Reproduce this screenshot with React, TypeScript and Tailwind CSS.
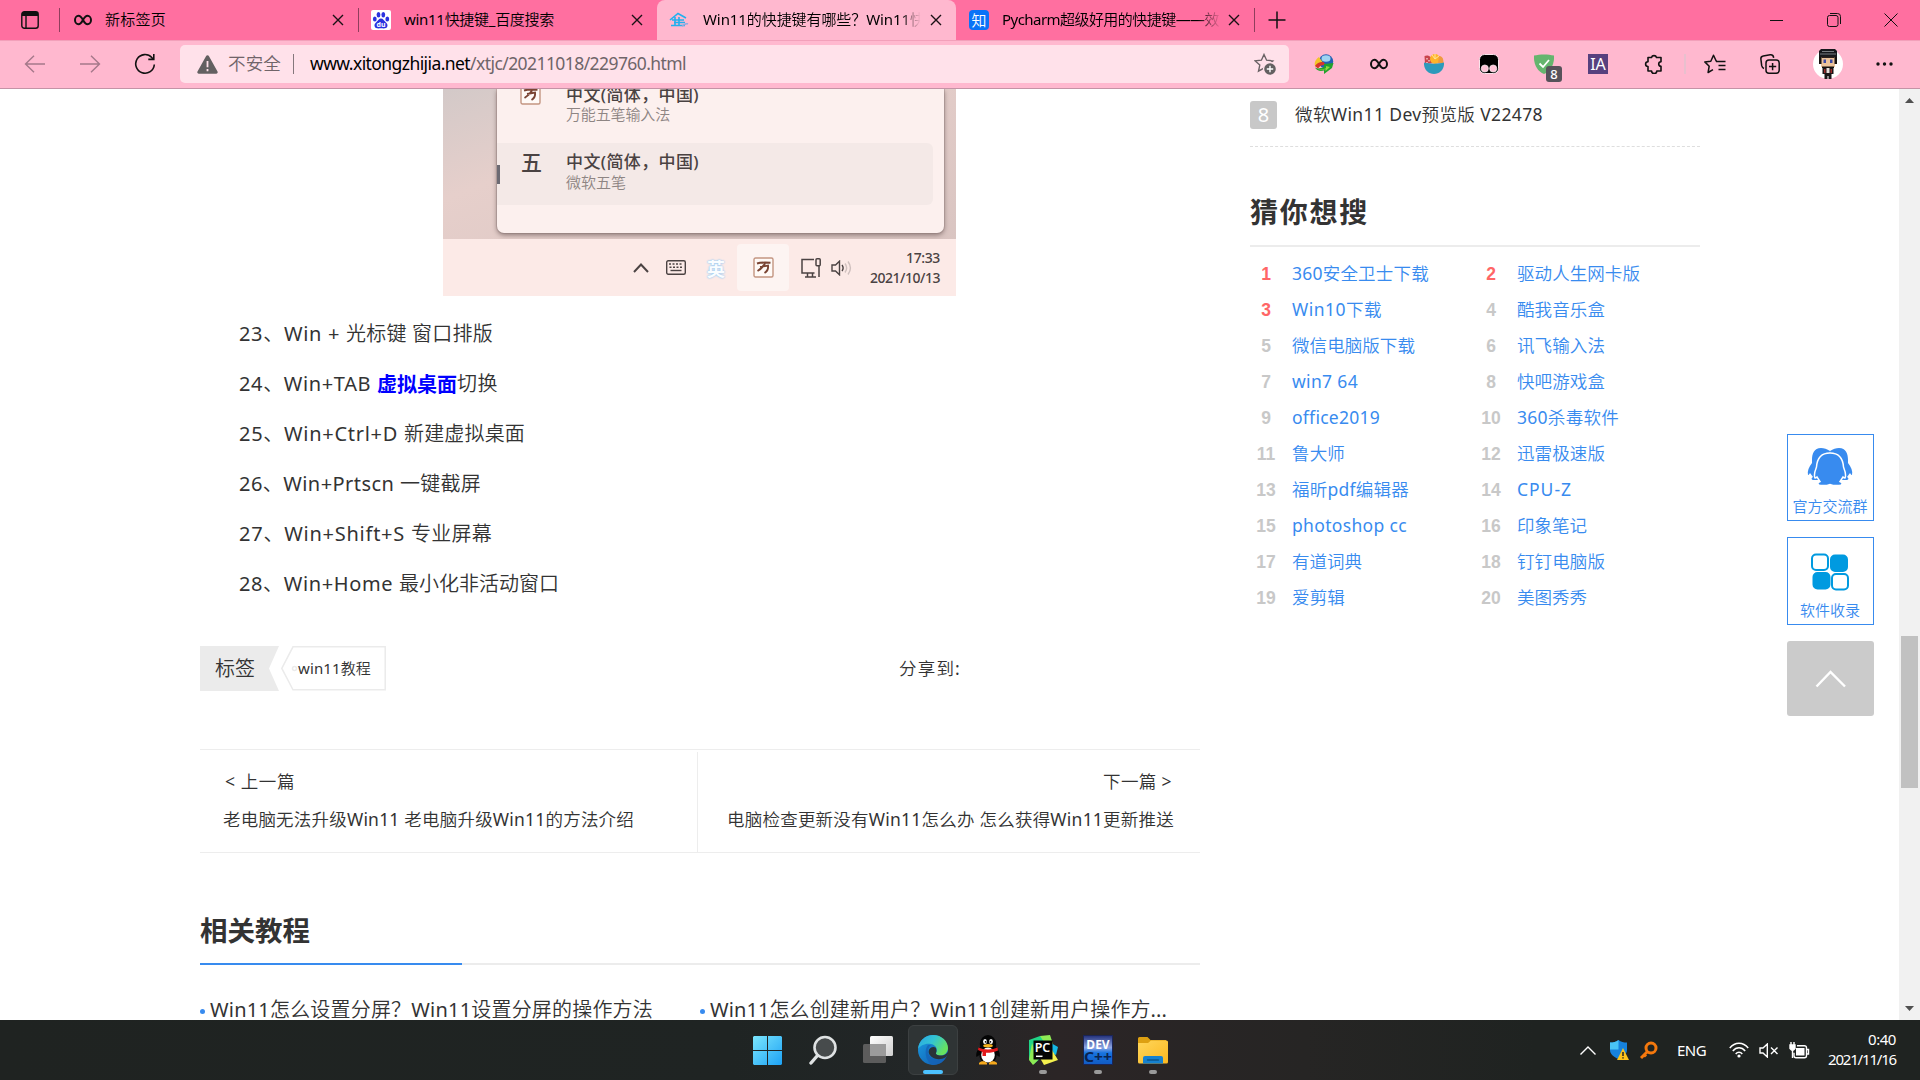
import { useLayoutEffect, useRef, type ReactNode } from "react";

/** Single line of text whose tracking is adjusted so that it spans `w` pixels. */
function Fit({ w, className = "", children }: { w: number; className?: string; children: ReactNode }) {
  const ref = useRef<HTMLSpanElement>(null);
  useLayoutEffect(() => {
    const el = ref.current;
    if (!el) return;
    el.style.letterSpacing = "0px";
    const n = Array.from(el.textContent ?? "").length;
    el.style.letterSpacing = `${(w - el.getBoundingClientRect().width) / n}px`;
  }, [w]);
  return (
    <span ref={ref} className={`inline-block shrink-0 whitespace-pre ${className}`}>
      {children}
    </span>
  );
}

const Cross = ({ className = "" }: { className?: string }) => (
  <svg className={`shrink-0 ${className}`} width="12" height="12" viewBox="0 0 12 12" fill="none" stroke="#1a1014" strokeWidth="1.4">
    <path d="M1 1l10 10M11 1L1 11" />
  </svg>
);

const Infinity2 = ({ className = "" }: { className?: string }) => (
  <svg className={`shrink-0 ${className}`} width="18" height="12" viewBox="0 0 18 12" fill="none" stroke="#111" strokeWidth="2">
    <path d="M9 6C7.400 3 6.200 1.800 4.500 1.800a3.500 4.200 0 0 0 0 8.400C6.200 10.200 7.400 9 9 6s2.800-4.200 4.500-4.200a3.500 4.200 0 0 1 0 8.400C11.800 10.200 10.600 9 9 6z" />
  </svg>
);

function TabBar() {
  return (
    <div className="flex h-10 items-center bg-[#ff6fa0] text-[15px] text-black">
      <svg className="ml-[21px] shrink-0" width="18" height="18" viewBox="0 0 18 18" fill="none" stroke="#111" strokeWidth="1.4">
        <rect x="0.8" y="0.8" width="16.400" height="16.400" rx="2.500" />
        <path d="M1 3h16" strokeWidth="4" />
        <path d="M5 4v13" />
      </svg>
      <div className="ml-5 h-6 w-px bg-[#8f3e5c]" />
      <Infinity2 className="ml-3.5" />
      <Fit w={61} className="ml-[13px] pb-px">新标签页</Fit>
      <Cross className="ml-[166px]" />
      <div className="ml-3.5 h-6 w-px bg-[#8f3e5c]" />
      <svg className="ml-3 shrink-0" width="20" height="20" viewBox="0 0 20 20">
        <rect width="20" height="20" rx="2" fill="#fff" />
        <g fill="#2a32df">
          <ellipse cx="3.800" cy="9" rx="1.900" ry="2.500" />
          <ellipse cx="7.500" cy="4.700" rx="1.900" ry="2.700" />
          <ellipse cx="12.300" cy="4.700" rx="1.900" ry="2.700" />
          <ellipse cx="16.300" cy="9" rx="1.900" ry="2.500" />
          <path d="M10 8.500c2 0 3 2 4.300 3.300 1.700 1.600 2.700 2.800 2 4.800-.7 1.900-2.700 2-6.300 1.700-3.600.3-5.600.2-6.300-1.700-.7-2 .3-3.200 2-4.800C7 10.500 8 8.500 10 8.500z" />
        </g>
        <text x="10" y="16.500" textAnchor="middle" fontSize="7" fontWeight="700" fill="#fff">du</text>
      </svg>
      <Fit w={150} className="ml-[13px] pb-px">win11快捷键_百度搜索</Fit>
      <Cross className="ml-[77px]" />
      <div className="ml-3.5 flex h-10 w-[299px] items-center rounded-t-lg bg-[#ffb8cf]">
        <svg className="ml-3 shrink-0" width="20" height="16" viewBox="0 0 20 16" fill="none" stroke="#23b0ee" strokeWidth="1.600">
          <path d="M1 8L9 1.500 17 6M3 8h12M5 10.500h11M2 13.500h14M6 5v9M10 5v9" />
          <path d="M13 14c2-1 4-3 6-2" stroke="#8fa9e0" />
        </svg>
        <Fit w={222} className="ml-3.5 pb-px [mask-image:linear-gradient(to_right,black_89%,transparent_98%)]">Win11的快捷键有哪些？Win11快</Fit>
        <Cross className="ml-[5px]" />
      </div>
      <svg className="ml-[13px] shrink-0" width="20" height="20" viewBox="0 0 20 20">
        <rect width="20" height="20" rx="4" fill="#0a73f7" />
        <text x="10" y="15.500" textAnchor="middle" fontSize="15" fontWeight="500" fill="#fff">知</text>
      </svg>
      <Fit w={217} className="ml-[13px] pb-px [mask-image:linear-gradient(to_right,black_90%,transparent_101%)]">Pycharm超级好用的快捷键——效</Fit>
      <Cross className="ml-[9px]" />
      <div className="ml-3.5 h-6 w-px bg-[#8f3e5c]" />
      <svg className="ml-[13px] shrink-0" width="18" height="18" viewBox="0 0 18 18" stroke="#111" strokeWidth="1.500">
        <path d="M9 0.500v17M0.500 9h17" />
      </svg>
      <svg className="ml-auto mr-[44px] shrink-0" width="13" height="13" viewBox="0 0 13 13" stroke="#111">
        <path d="M0 6.500h13" />
      </svg>
      <svg className="mr-[43px] shrink-0" width="14" height="14" viewBox="0 0 14 14" fill="none" stroke="#111">
        <rect x="0.500" y="2.500" width="10.500" height="11" rx="2" />
        <path d="M3 .5h7.500a3 3 0 0 1 3 3V11" />
      </svg>
      <svg className="mr-[22px] shrink-0" width="14" height="14" viewBox="0 0 14 14" stroke="#111">
        <path d="M.5.5l13 13M13.500.5l-13 13" />
      </svg>
    </div>
  );
}

const STAR = "M10 1.500l2.600 5.700 6.200.7-4.600 4.200 1.300 6.100L10 15.100l-5.500 3.100 1.300-6.100L1.200 7.900l6.200-.7z";

function Toolbar() {
  return (
    <div className="flex h-[49px] items-center border-b border-[#c493a6] bg-[#ffb8cf] shadow-[inset_0_1px_0_#f2a0ba]">
      <svg className="ml-6 shrink-0" width="21" height="18" viewBox="0 0 21 18" fill="none" stroke="#a5788a" strokeWidth="1.400">
        <path d="M10 .7L1.500 9l8.500 8.300M1.500 9H21" />
      </svg>
      <svg className="ml-[35px] shrink-0" width="21" height="18" viewBox="0 0 21 18" fill="none" stroke="#a5788a" strokeWidth="1.400">
        <path d="M11 .7L19.500 9 11 17.300M19.500 9H0" />
      </svg>
      <svg className="ml-[33px] shrink-0" width="22" height="22" viewBox="0 0 22 22" fill="none" stroke="#111" strokeWidth="1.600">
        <path d="M20.300 11.500A9.300 9.300 0 1 1 17.800 4.500l1.700 1.700M19.800 1v5.400h-5.500" />
      </svg>
      <div className="ml-6 flex h-[38px] w-[1109px] items-center rounded-[5px] bg-[#ffe1ea] text-[17.5px]">
        <svg className="ml-[17px] shrink-0" width="21" height="19" viewBox="0 0 21 19">
          <path d="M9 1.200a1.700 1.700 0 0 1 3 0l8.500 15.400a1.500 1.500 0 0 1-1.300 2.200H1.800a1.500 1.500 0 0 1-1.300-2.200z" fill="#636061" />
          <path d="M10.500 6v6.200M10.500 14v2.200" stroke="#ffe1ea" strokeWidth="1.800" />
        </svg>
        <Fit w={53} className="ml-2.5 pb-0.5 text-[#706469]">不安全</Fit>
        <div className="ml-3 h-5 w-px bg-[#85777c]" />
        <Fit w={376} className="ml-4 pb-0.5 text-[#6f6569]">
          <span className="text-black">www.xitongzhijia.net</span>/xtjc/20211018/229760.html
        </Fit>
        <svg className="ml-auto mr-[13px] shrink-0" width="22" height="22" viewBox="0 0 22 22" fill="none" stroke="#6a6265" strokeWidth="1.400">
          <path d={STAR} />
          <circle cx="16" cy="16" r="6.500" fill="#636061" stroke="#ffe1ea" />
          <path d="M16 12.800v6.400M12.800 16h6.400" stroke="#fff" />
        </svg>
      </div>
      <svg className="ml-[25px] shrink-0" width="20" height="20" viewBox="0 0 20 20">
        <circle cx="12" cy="7.500" r="7.200" fill="#2360b4" />
        <ellipse cx="12" cy="4.500" rx="4.500" ry="3.200" fill="#9fd4f2" />
        <path d="M5 3C2 5 0 8 1 12l3 2c0-3 1.500-5 4.500-6C7 6 6 4.500 5 3z" fill="#f3c529" />
        <path d="M1 12c2-3 5-4.500 8.500-4L12 11c-4-.5-6 .5-8 3.500z" fill="#d5362a" />
        <path d="M1 13.500c2.500 1.500 5 1 9-.5v-3l9.500-1-1.500 5-8 6v-3.500c-4 1-7.500 0-9-3z" fill="#23a12d" />
        <path d="M4 15c3 1 6 .5 8-1v-2l4 1-4.500 4v-2c-3 1.500-6 1.500-7.500 0z" fill="#8fdb3f" />
      </svg>
      <Infinity2 className="ml-9" />
      <svg className="ml-9 shrink-0" width="20" height="20" viewBox="0 0 20 20">
        <path d="M.5 2C4 .5 8 2 9.500 9L1 10z" fill="#c9444c" />
        <path d="M3 4v1.500M5 6v1.500M3 8v1" stroke="#fff" />
        <circle cx="11" cy="5" r="5" fill="#ffb32a" />
        <path d="M11 5l-3-4M11 5l4-3M11 5v-5" stroke="#ffe49a" />
        <path d="M15 2c3 0 4.500 2 4.500 7H14z" fill="#ef9a3f" />
        <path d="M0 8.500c5 1.500 15 1.500 20 0C20.500 15 16 20 10 20S-.5 15 0 8.500z" fill="#2d9abb" />
      </svg>
      <svg className="ml-[35px] shrink-0" width="20" height="20" viewBox="0 0 20 20">
        <rect x="0.500" y="0.500" width="19" height="19" rx="5" fill="#000" stroke="#f9e4eb" />
        <circle cx="5.800" cy="14.500" r="3.600" fill="#ffc3d7" stroke="#fff" strokeWidth=".6" />
        <circle cx="14.200" cy="14.500" r="3.600" fill="#ffc3d7" stroke="#fff" strokeWidth=".6" />
      </svg>
      <div className="relative ml-[35px] shrink-0">
        <svg width="20" height="20" viewBox="0 0 20 20">
          <path d="M0 1.500C6 0 14 0 20 1.500 20.500 10 17 17 10 20 3 17-.5 10 0 1.500z" fill="#65b56e" />
          <path d="M5.500 9.500L9 13l6-7" fill="none" stroke="#fff" strokeWidth="1.800" />
        </svg>
        <span className="absolute left-[12px] top-[12px] flex h-4 w-4 items-center justify-center rounded-[3px] bg-[#57525a] text-[13px] font-medium leading-none text-white">8</span>
      </div>
      <div className="ml-[34px] flex h-5 w-5 shrink-0 items-center justify-center bg-[#57407e] text-[16px] leading-none text-white">IA</div>
      <svg className="ml-9 shrink-0" width="20" height="20" viewBox="0 0 20 20" fill="none" stroke="#111" strokeWidth="1.600">
        <path d="M4 3.500h3.500a2.600 2.600 0 0 1 5 0H17v4.200a2.300 2.300 0 0 0 0 4.600V17h-4.200a2.600 2.600 0 0 1-5.200 0H4v-4.500a2.400 2.400 0 0 1 0-4.800z" strokeLinejoin="round" />
      </svg>
      <div className="ml-5 h-5 w-0.5 bg-[#e8c0ce]" />
      <svg className="ml-[18px] shrink-0" width="22" height="20" viewBox="0 0 22 20" fill="none" stroke="#111" strokeWidth="1.500">
        <path d="M12 7.500h9.500M14.500 11.500h7M14.500 15.500h7" />
        <path d="M13 7.200h-.7L9.500 1.300 6.800 7.200l-6 .7 4.400 4.300-1.100 6.300L9 15.700" strokeLinejoin="round" />
      </svg>
      <svg className="ml-[34px] shrink-0" width="20" height="20" viewBox="0 0 20 20" fill="none" stroke="#111" strokeWidth="1.500">
        <rect x="6" y="6" width="13.200" height="13.200" rx="3" />
        <path d="M12.600 9v7.200M9 12.600h7.200M4 14.500c-1.500-.5-2-1.500-2.300-2.800L.9 5.200C.7 3.500 1.500 2.300 3.200 2l7-1.200c1.700-.2 3 .5 3.300 2.200l.1.800" />
      </svg>
      <svg className="ml-[33px] shrink-0" width="30" height="30" viewBox="0 0 30 30">
        <circle cx="15" cy="15" r="15" fill="#fff" />
        <path d="M8 0h14l2 2v7H6V2z" fill="#16181c" />
        <path d="M9 2.500h12M7 5h16" stroke="#777b80" />
        <rect x="8" y="8" width="14" height="10" fill="#ecc39b" />
        <path d="M6 8h2.500v7H6zM21.500 8H24v7h-2.500zM9 17.500h12V19H9z" fill="#15110f" />
        <path d="M8.500 7.500h13v1.500h-13z" fill="#2c211e" />
        <path d="M10.500 10.500H13V14h-2.500zM17 10.500h2.500V14H17z" fill="#3c4aa5" />
        <path d="M9.500 19h11v6h-2v5h-3v-3h-1v3h-3v-5h-2z" fill="#1b1718" />
        <path d="M13.500 19h3v5h-3z" fill="#e8e0dc" />
        <path d="M11 20h1.500v4H11zM17.500 20H19v4h-1.500z" fill="#9c2a2a" />
      </svg>
      <svg className="ml-[33px] shrink-0" width="17" height="4" viewBox="0 0 17 4" fill="#111">
        <circle cx="2" cy="2" r="1.700" />
        <circle cx="8.500" cy="2" r="1.700" />
        <circle cx="15" cy="2" r="1.700" />
      </svg>
    </div>
  );
}

const WanIcon = () => (
  <svg className="shrink-0" width="21" height="21" viewBox="0 0 21 21" fill="none">
    <rect x="1" y="1" width="19" height="19" rx="1.500" fill="#fffaf7" stroke="#c39581" strokeWidth="1.400" />
    <path d="M4 6.500c4-1.500 8-1.200 13.500-.8M7 10l8-1.500c.5 3.500-1 6-3.500 7.500M12 6.500c-2 3.500-4 5.500-7.500 7.500" stroke="#7a4433" strokeWidth="1.900" />
  </svg>
);

function InputMethodShot() {
  return (
    <div className="ml-[243px] flex h-[207px] w-[513px] flex-col bg-[linear-gradient(160deg,#d3c9c8_0%,#e6cfcb_28%,#d6c2bf_100%)] text-[#4a4242]">
      <div className="ml-[54px] h-36 w-[447px] shrink-0 overflow-hidden rounded-b-[7px] bg-[#fcf0ee] shadow-[0_2px_5px_#8a7674,0_0_0_1px_#c5b0ae]">
        <div className="-mt-3.5 flex h-[68px] pt-[9px]">
          <div className="ml-[23px] w-[46px]"><WanIcon /></div>
          <div className="flex flex-col items-start text-[17px] leading-[22px]">
            <Fit w={133} className="font-['Noto_Sans','Noto_Sans_CJK_SC',sans-serif] font-medium">中文(简体，中国)</Fit>
            <Fit w={104} className="-mt-[3px] text-[15px] text-[#8e8583]">万能五笔输入法</Fit>
          </div>
        </div>
        <div className="flex h-[62px] w-[436px] items-center rounded-r-md bg-[#f4e9e7]">
          <div className="h-[19px] w-[3px] bg-[#6c6a73]" />
          <div className="ml-[21px] w-[45px] pb-[26px] font-['Noto_Sans_CJK_SC',sans-serif] text-[21px] font-medium leading-none">五</div>
          <div className="flex flex-col items-start pb-1 text-[17px] leading-[22px]">
            <Fit w={133} className="font-['Noto_Sans','Noto_Sans_CJK_SC',sans-serif] font-medium">中文(简体，中国)</Fit>
            <Fit w={60} className="-mt-0.5 text-[15px] text-[#8e8583]">微软五笔</Fit>
          </div>
        </div>
      </div>
      <div className="mt-1.5 flex h-[57px] items-center bg-[#fceae7]">
        <svg className="ml-[190px] shrink-0" width="16" height="10" viewBox="0 0 16 10" fill="none" stroke="#4b4343" strokeWidth="2">
          <path d="M1 9l7-7.500L15 9" />
        </svg>
        <svg className="ml-[17px] shrink-0" width="20" height="15" viewBox="0 0 20 15" fill="none" stroke="#4b4343" strokeWidth="1.400">
          <rect x="0.700" y="0.700" width="18.600" height="13.600" rx="1.500" />
          <path d="M3 4h14M3.500 7.200h13" strokeDasharray="2 1.500" />
          <path d="M4.500 10.500h11" />
        </svg>
        <span className="ml-[21px] w-5 font-['Noto_Sans_CJK_SC',sans-serif] text-[18px] font-bold leading-none text-[#fafdff] [text-shadow:0_0_2px_#9accf5,0_0_2px_#9accf5]">英</span>
        <div className="ml-2.5 flex h-[47px] w-[52px] items-center justify-center rounded bg-[#fdf4f2]"><WanIcon /></div>
        <svg className="ml-3 shrink-0" width="20" height="20" viewBox="0 0 20 20" fill="none" stroke="#4b4343" strokeWidth="1.500">
          <path d="M13 1.500H1v13.500h12.500M4 19h11M6.500 15v4M11.500 15v4M18 8v11" />
          <rect x="15" y="0.800" width="4.200" height="7" rx="1" />
        </svg>
        <svg className="ml-2.5 shrink-0" width="21" height="16" viewBox="0 0 21 16" fill="none" stroke="#4b4343" strokeWidth="1.400">
          <path d="M1 5h3.500l4-3.800v13.600l-4-3.800H1zM11 5c1.500 2 1.500 4 0 6" />
          <path d="M14 3.500c2.200 3 2.200 6 0 9M17 1.500c3 4 3 9 0 13" stroke="#cfc0be" />
        </svg>
        <div className="ml-auto mr-4 flex flex-col items-end text-[14px] font-medium leading-5 text-[#4a4242]">
          <Fit w={34}>17:33</Fit>
          <Fit w={70}>2021/10/13</Fit>
        </div>
      </div>
    </div>
  );
}

/** Each step is a run of pieces: text, width and an optional highlight. */
const STEPS: [string, number, boolean?][][] = [
  [["23、Win + ", 107], ["光标键 窗口排版", 147]],
  [["24、Win+TAB ", 138], ["虚拟桌面", 80, true], ["切换", 41]],
  [["25、Win+Ctrl+D ", 165], ["新建虚拟桌面", 121]],
  [["26、Win+Prtscn ", 161], ["一键截屏", 81]],
  [["27、Win+Shift+S ", 172], ["专业屏幕", 81]],
  [["28、Win+Home ", 160], ["最小化非活动窗口", 160]],
];

function Article() {
  return (
    <div className="ml-[200px] w-[1000px] shrink-0 text-[#333]">
      <InputMethodShot />
      <div className="mt-[13px] pl-[39px] text-[20px]">
        {STEPS.map((pieces, i) => (
          <div key={i} className="flex h-[50px] items-center">
            {pieces.map(([text, w, hot]) => (
              <Fit key={text} w={w} className={hot ? "pb-px font-['Noto_Sans_CJK_SC',sans-serif] font-bold text-[#0000ff]" : ""}>{text}</Fit>
            ))}
          </div>
        ))}
      </div>

      <div className="mt-[37px] flex h-[45px] items-center">
        <div className="flex h-[45px] w-[79px] items-center bg-[#ebebeb] pl-[15px] text-[20px] [clip-path:polygon(0_0,100%_0,calc(100%-10px)_50%,100%_100%,0_100%)]">标签</div>
        <div className="relative ml-0.5 h-[45px] w-[105px]">
          <svg width="105" height="45" viewBox="0 0 105 45" fill="none" stroke="#ebebeb" strokeWidth="1.500">
            <path d="M12 .8h92.200v43H12L.8 22.300z" />
            <circle cx="13.500" cy="22.500" r="2" />
          </svg>
          <Fit w={73} className="absolute left-[17px] top-0 text-[15px] leading-[45px]">win11教程</Fit>
        </div>
        <Fit w={62} className="ml-[513px] text-[17.5px]">分享到:</Fit>
      </div>

      <div className="mt-[58px] flex h-[104px] border-y border-[#ededed] text-[17.5px]">
        <div className="mt-0.5 flex w-[498px] flex-col border-r border-[#ededed] pl-[23px] pt-[11px]">
          <div className="flex h-[37px] items-center pl-0.5"><Fit w={70}>{"< 上一篇"}</Fit></div>
          <div className="flex h-[38px] items-center"><Fit w={411}>老电脑无法升级Win11 老电脑升级Win11的方法介绍</Fit></div>
        </div>
        <div className="mt-0.5 flex flex-1 flex-col items-end pr-[26px] pt-[11px]">
          <div className="flex h-[37px] items-center pr-0.5"><Fit w={69}>{"下一篇 >"}</Fit></div>
          <div className="flex h-[38px] items-center"><Fit w={447}>电脑检查更新没有Win11怎么办 怎么获得Win11更新推送</Fit></div>
        </div>
      </div>

      <h2 className="mt-[57px] flex h-10 items-center font-['Noto_Sans_CJK_SC',sans-serif] text-[27.5px] font-bold">相关教程</h2>
      <div className="mt-[13px] h-0.5 bg-[#ececec]"><div className="h-0.5 w-[262px] bg-[#388bef]" /></div>
      <div className="flex h-[90px] text-[20px]">
        <div className="flex w-[500px] items-center">
          <i className="mt-0.5 h-[5px] w-[5px] rounded-full bg-[#388bef]" />
          <Fit w={443} className="ml-[5px]">Win11怎么设置分屏？Win11设置分屏的操作方法</Fit>
        </div>
        <div className="flex w-[500px] items-center">
          <i className="mt-0.5 h-[5px] w-[5px] rounded-full bg-[#388bef]" />
          <Fit w={457} className="ml-[5px]">Win11怎么创建新用户？Win11创建新用户操作方...</Fit>
        </div>
      </div>
    </div>
  );
}

const SEARCHES: [string, number][] = [
  ["360安全卫士下载", 137], ["驱动人生网卡版", 123],
  ["Win10下载", 90], ["酷我音乐盒", 88],
  ["微信电脑版下载", 123], ["讯飞输入法", 88],
  ["win7 64", 66], ["快吧游戏盒", 88],
  ["office2019", 88], ["360杀毒软件", 102],
  ["鲁大师", 53], ["迅雷极速版", 88],
  ["福昕pdf编辑器", 117], ["CPU-Z", 55],
  ["photoshop cc", 115], ["印象笔记", 70],
  ["有道词典", 70], ["钉钉电脑版", 88],
  ["爱剪辑", 53], ["美图秀秀", 70],
];

function Sidebar() {
  return (
    <div className="ml-[50px] w-[450px] shrink-0">
      <div className="flex h-[58px] items-start border-b border-dashed border-[#dedede] pt-3">
        <div className="flex h-7 w-[27px] items-center justify-center rounded-[3px] bg-[#c8c8c8] text-[20px] leading-none text-white">8</div>
        <Fit w={248} className="ml-[18px] text-[17.5px] leading-[26px] text-[#333]">微软Win11 Dev预览版 V22478</Fit>
      </div>
      <h2 className="mt-11 flex h-10 items-center font-['Noto_Sans_CJK_SC',sans-serif] text-[28px] font-bold text-[#333]"><Fit w={119}>猜你想搜</Fit></h2>
      <div className="mt-3.5 h-0.5 bg-[#ececec]" />
      <div className="mt-2 grid grid-cols-2">
        {SEARCHES.map(([label, w], i) => (
          <div key={label} className="flex h-9 items-center">
            <span className={`w-8 pt-0.5 text-center font-['Liberation_Sans'] text-[17.5px] font-bold ${i < 3 ? "text-[#ff6666]" : "text-[#c8c8c8]"}`}>{i + 1}</span>
            <Fit w={w} className="ml-2.5 text-[17.5px] text-[#388bef]">{label}</Fit>
          </div>
        ))}
      </div>
    </div>
  );
}

function FloatingButtons() {
  return (
    <div className="ml-[87px] flex w-[87px] shrink-0 flex-col pt-[345px] text-[15px] text-[#388bef]">
      <div className="flex h-[87px] flex-col items-center border border-[#388bef] pr-px pt-[13px]">
        <svg className="shrink-0" width="46" height="38" viewBox="0 0 46 38" fill="#388bef">
          <path d="M14 0C7 0 5 6 5 12v3c-3 4-5 8-4 12 1 0 2-2 2-2l3 4c-2 1-2 3 1 3h12L23 3C20 1 17 0 14 0zM32 0c7 0 9 6 9 12v3c3 4 5 8 4 12-1 0-2-2-2-2l-3 4c2 1 2 3-1 3H27L23 3c3-2 6-3 9-3z" />
          <path d="M23 5C13 5 10 12 9.500 19c-2 5-2.500 9-1.500 11 1 0 2-1 2-1l3 4.500c-3 1-3 4 1 4h6l3-1 3 1h6c4 0 4-3 1-4l3-4.500s1 1 2 1c1-2 .5-6-1.500-11C36 12 33 5 23 5z" stroke="#fff" strokeWidth="1.500" />
        </svg>
        <Fit w={75} className="leading-[40px]">官方交流群</Fit>
      </div>
      <div className="mt-4 flex h-[88px] flex-col items-center border border-[#388bef] pr-px pt-[15px]">
        <svg className="shrink-0" width="38" height="38" viewBox="0 0 38 38" fill="#009ae0" stroke="#009ae0" strokeWidth="2">
          <rect x="1" y="1.500" width="16" height="15.500" rx="4" fill="none" />
          <rect x="20" y="2.500" width="16" height="15.500" rx="4" />
          <rect x="2.500" y="20" width="16" height="15.500" rx="4" />
          <rect x="21" y="21" width="16" height="15.500" rx="4" fill="none" />
        </svg>
        <Fit w={60} className="leading-[38px]">软件收录</Fit>
      </div>
      <div className="mt-4 flex h-[75px] items-center justify-center rounded-[3px] bg-[#cbcbcb]">
        <svg width="32" height="18" viewBox="0 0 32 18" fill="none" stroke="#fff" strokeWidth="2.400">
          <path d="M1.500 16.500L15.500 2 30 16.500" />
        </svg>
      </div>
    </div>
  );
}

function Scrollbar() {
  return (
    <div className="ml-auto flex w-[21px] flex-col items-center bg-[#f1f1f1] py-[9px]">
      <svg width="9" height="5" viewBox="0 0 9 5" fill="#505050"><path d="M0 5L4.500 0 9 5z" /></svg>
      <div className="mt-[533px] h-[152px] w-[17px] bg-[#c1c1c1]" />
      <svg className="mt-auto" width="9" height="5" viewBox="0 0 9 5" fill="#505050"><path d="M0 0L4.500 5 9 0z" /></svg>
    </div>
  );
}

const Dot = () => <div className="h-1 w-2 rounded-full bg-[#9a9a9a]" />;

function Taskbar() {
  return (
    <div className="flex h-[60px] items-start bg-[linear-gradient(90deg,#1f2321_0%,#1f2423_38%,#222627_48%,#2b2526_55%,#262524_68%,#1f2321_80%)] text-white">
      <svg className="ml-[753px] mt-4 shrink-0" width="29" height="29" viewBox="0 0 29 29">
        <defs>
          <linearGradient id="start" x1="0" y1="0" x2="1" y2="1">
            <stop offset="0" stopColor="#7be6fd" />
            <stop offset="1" stopColor="#1da2f5" />
          </linearGradient>
        </defs>
        <path d="M1 0h13v14H0V1zM15 0h13l1 1v13H15zM0 15h14v14H1l-1-1zM15 15h14v13l-1 1H15z" fill="url(#start)" />
      </svg>
      <svg className="ml-[27px] mt-[15px] shrink-0" width="28" height="30" viewBox="0 0 28 30" fill="none" stroke="#dfe2e3">
        <circle cx="16" cy="12.500" r="10.500" strokeWidth="2.600" fill="#474b4c" />
        <path d="M8.500 20.500L2 28" strokeWidth="3.400" strokeLinecap="round" />
      </svg>
      <svg className="ml-[26px] mt-4 shrink-0" width="30" height="28" viewBox="0 0 30 28">
        <defs>
          <linearGradient id="tv" x1="0" y1="0" x2="1" y2="1">
            <stop offset="0" stopColor="#fff" />
            <stop offset="1" stopColor="#cfcfcf" />
          </linearGradient>
        </defs>
        <rect x="7" width="23" height="20" rx="1.500" fill="url(#tv)" />
        <rect y="8" width="23" height="19" rx="1.500" fill="#666" fillOpacity=".85" />
        <rect x="7" y="8" width="16" height="12" fill="#9b9b9b" />
      </svg>
      <div className="ml-[15px] mt-[5px] flex h-[50px] w-[50px] shrink-0 flex-col items-center rounded-md border border-[#3c4041] bg-[#2f3435] pt-[9px]">
        <svg width="30" height="30" viewBox="0 0 30 30">
          <defs>
            <linearGradient id="edgeTop" x1="0" y1="0" x2="1" y2=".5">
              <stop offset="0" stopColor="#2aa5e5" />
              <stop offset=".5" stopColor="#33c4d3" />
              <stop offset="1" stopColor="#67e25f" />
            </linearGradient>
            <linearGradient id="edgeLow" x1="0" y1="0" x2="1" y2="1">
              <stop offset="0" stopColor="#1b9de2" />
              <stop offset="1" stopColor="#0f56ad" />
            </linearGradient>
          </defs>
          <circle cx="15" cy="15" r="15" fill="url(#edgeLow)" />
          <path d="M0 14C1 5 8 0 15 0c9 0 15 6.500 15 13 0 5-4 7.500-7.500 7.500-3 0-5-1.200-4.500-2.500 2-3 .5-8-5-9C7 8 2 11 0 14z" fill="url(#edgeTop)" />
          <path d="M10 10c-4 5-3 15 4 20 5 .5 11-2 13.500-7-7 4-17 1-17.500-6 0-3 1-5.500 3-7z" fill="#1562b5" opacity=".75" />
          <path d="M17.500 12.500c-4-2-8 2-6.500 6 2 5 10 8 17 3.500l2-3v-2c-2 3-5 3.500-7.500 3.500-3 0-5-1.200-4.500-2.500.8-1.500.5-4-.5-5.500z" fill="#2a3238" />
        </svg>
        <div className="mt-[5px] h-1 w-5 shrink-0 rounded-full bg-[#4cc2ff]" />
      </div>
      <svg className="ml-[18px] mt-[15px] shrink-0" width="24" height="30" viewBox="0 0 24 30">
        <ellipse cx="12" cy="9" rx="8.200" ry="9" fill="#050505" />
        <path d="M4 12C1 15-.5 19 .5 22l3-2c0 5 3 8 8.500 8s8.500-3 8.500-8l3 2c1-3-.5-7-3.500-10z" fill="#050505" />
        <ellipse cx="12" cy="20" rx="6.800" ry="7.500" fill="#fff" />
        <ellipse cx="9" cy="6.500" rx="1.900" ry="2.500" fill="#fff" />
        <ellipse cx="15" cy="6.500" rx="1.900" ry="2.500" fill="#fff" />
        <circle cx="9.600" cy="6.800" r=".9" />
        <circle cx="14.400" cy="6.800" r=".9" />
        <ellipse cx="12" cy="10.700" rx="4.800" ry="1.600" fill="#f8b31c" />
        <path d="M2.500 12.500c5 2.500 14 2.500 19 0l.5 3c-4 2-9 2.500-12 2.300V21H6.500v-4L2 15z" fill="#e2191b" />
        <path d="M3 28c2-2.500 6-2.500 8 0v1.500H3zM13 28c2-2.500 6-2.500 8 0v1.500h-8z" fill="#f5a81c" />
      </svg>
      <div className="ml-7 mt-[15px] flex w-[30px] shrink-0 flex-col items-center gap-[5px]">
        <svg width="30" height="30" viewBox="0 0 30 30">
          <path d="M1 5L12 1l11 3 1 9L6 29 1 24z" fill="#20d487" />
          <path d="M12 1l10-1 3 9-9-2zM4 8l6 17-5 5-4-5z" fill="#8eea54" />
          <path d="M23 8l7 4-2 8-6-3z" fill="#16b9e5" />
          <path d="M12 23l12-8 6 10-14 5z" fill="#f4f04e" />
          <rect x="5.500" y="5.500" width="19" height="19" fill="#050505" />
          <text x="14.500" y="16.500" textAnchor="middle" fontSize="12.500" fontWeight="600" fill="#fff">PC</text>
          <path d="M8 21.300h6.500" stroke="#fff" strokeWidth="1.500" />
        </svg>
        <Dot />
      </div>
      <div className="ml-[25px] mt-[15px] flex w-[30px] shrink-0 flex-col items-center gap-[5px]">
        <svg width="30" height="30" viewBox="0 0 30 30">
          <defs>
            <linearGradient id="dev" x1="0" y1="0" x2="0" y2="1">
              <stop offset="0" stopColor="#22307a" />
              <stop offset=".42" stopColor="#8ea6e4" />
              <stop offset=".6" stopColor="#1673e0" />
              <stop offset="1" stopColor="#125bc4" />
            </linearGradient>
          </defs>
          <rect x=".5" y=".5" width="29" height="29" fill="url(#dev)" stroke="#1a2557" />
          <text x="15" y="27" textAnchor="middle" fontSize="14" fontWeight="700" fill="#0a2350" textLength="28" lengthAdjust="spacingAndGlyphs">C++</text>
          <text x="15" y="13.500" textAnchor="middle" fontSize="12" fontWeight="700" fill="#fff">DEV</text>
        </svg>
        <Dot />
      </div>
      <div className="ml-[25px] mt-[15px] flex w-[30px] shrink-0 flex-col items-center gap-[5px]">
        <svg width="30" height="30" viewBox="0 0 30 30">
          <defs>
            <linearGradient id="fold" x1="0" y1="0" x2="1" y2="1">
              <stop offset="0" stopColor="#ffd65b" />
              <stop offset="1" stopColor="#fbb820" />
            </linearGradient>
          </defs>
          <path d="M0 3.500A1.500 1.500 0 0 1 1.500 2h8l3 3H28v8H0z" fill="#dda012" />
          <path d="M0 8h10l3-2.500h15.500A1.500 1.500 0 0 1 30 7v20a1.500 1.500 0 0 1-1.500 1.500h-27A1.500 1.500 0 0 1 0 27z" fill="url(#fold)" />
          <path d="M5 28.500V23a2 2 0 0 1 2-2h16a2 2 0 0 1 2 2v5.500z" fill="#1681cf" />
          <path d="M9.500 25h11" stroke="#0b568e" strokeWidth="1.400" strokeLinecap="round" />
        </svg>
        <Dot />
      </div>

      <div className="ml-auto flex h-[60px] items-center text-[15px]">
        <svg className="shrink-0" width="16" height="9" viewBox="0 0 16 9" fill="none" stroke="#fff" strokeWidth="1.400"><path d="M.5 8.500L8 1l7.500 7.500" /></svg>
        <svg className="ml-[13px] shrink-0" width="20" height="20" viewBox="0 0 20 20">
          <path d="M9.500 0c2.500 2 5 2.500 8.500 2.500V10c0 4-4 7-8.500 9C4.500 17 1 14 1 10V2.500C4.500 2.500 7 2 9.500 0z" fill="#1682dd" />
          <path d="M9.500 0v9.500H1v-7C4.500 2.500 7 2 9.500 0z" fill="#49c4f5" />
          <path d="M14 8l6 12H8z" fill="#fcc21b" />
          <path d="M14 12v4M14 17.200v1.300" stroke="#222" strokeWidth="1.500" />
        </svg>
        <svg className="ml-2.5 shrink-0" width="19" height="19" viewBox="0 0 19 19" fill="none" stroke="#f4780d" strokeWidth="3">
          <circle cx="12" cy="7" r="5" />
          <path d="M8.500 10.500L2 17M4.500 13l2.500 2.500" />
        </svg>
        <Fit w={29} className="ml-[19px]">ENG</Fit>
        <svg className="ml-[23px] shrink-0" width="20" height="16" viewBox="0 0 20 16" fill="none" stroke="#fff" strokeWidth="1.500">
          <path d="M.8 6C6-.4 14-.4 19.200 6M3.800 9c3.600-4.300 8.800-4.300 12.400 0M6.700 12c1.900-2.300 4.700-2.300 6.600 0" />
          <circle cx="10" cy="14" r="1.600" fill="#fff" stroke="none" />
        </svg>
        <svg className="ml-2.5 shrink-0" width="20" height="15" viewBox="0 0 20 15" fill="none" stroke="#fff" strokeWidth="1.400">
          <path d="M1 5h3l4.300-4v13L4 10H1zM12 4.500l6.500 6.500M18.500 4.500L12 11" />
        </svg>
        <svg className="ml-2.5 shrink-0" width="21" height="17" viewBox="0 0 21 17" fill="none" stroke="#fff" strokeWidth="1.400">
          <path d="M8 3.700h7.500a2 2 0 0 1 2 2v8a2 2 0 0 1-2 2H7a2 2 0 0 1-2-2v-3" />
          <rect x="7" y="6" width="8.500" height="7.500" fill="#fff" stroke="none" />
          <path d="M18 7.500h1.500v4.500H18" />
          <path d="M1 3h5v3.500L4.500 8h-2L1 6.500zM2 0v3M5 0v3M3.500 8v8" fill="#fff" />
        </svg>
        <div className="ml-[17px] mr-6 flex w-[69px] flex-col items-end pb-0.5 leading-5">
          <Fit w={28}>0:40</Fit>
          <Fit w={68}>2021/11/16</Fit>
        </div>
      </div>
    </div>
  );
}

export default function App() {
  return (
    <div className="flex h-[1080px] w-[1920px] flex-col overflow-hidden bg-white font-['Noto_Sans','Noto_Sans_CJK_SC_DemiLight','Noto_Sans_CJK_SC_Light','Noto_Sans_CJK_SC',sans-serif]">
      <TabBar />
      <Toolbar />
      <main className="flex h-[931px] shrink-0 overflow-hidden">
        <Article />
        <Sidebar />
        <FloatingButtons />
        <Scrollbar />
      </main>
      <Taskbar />
    </div>
  );
}
